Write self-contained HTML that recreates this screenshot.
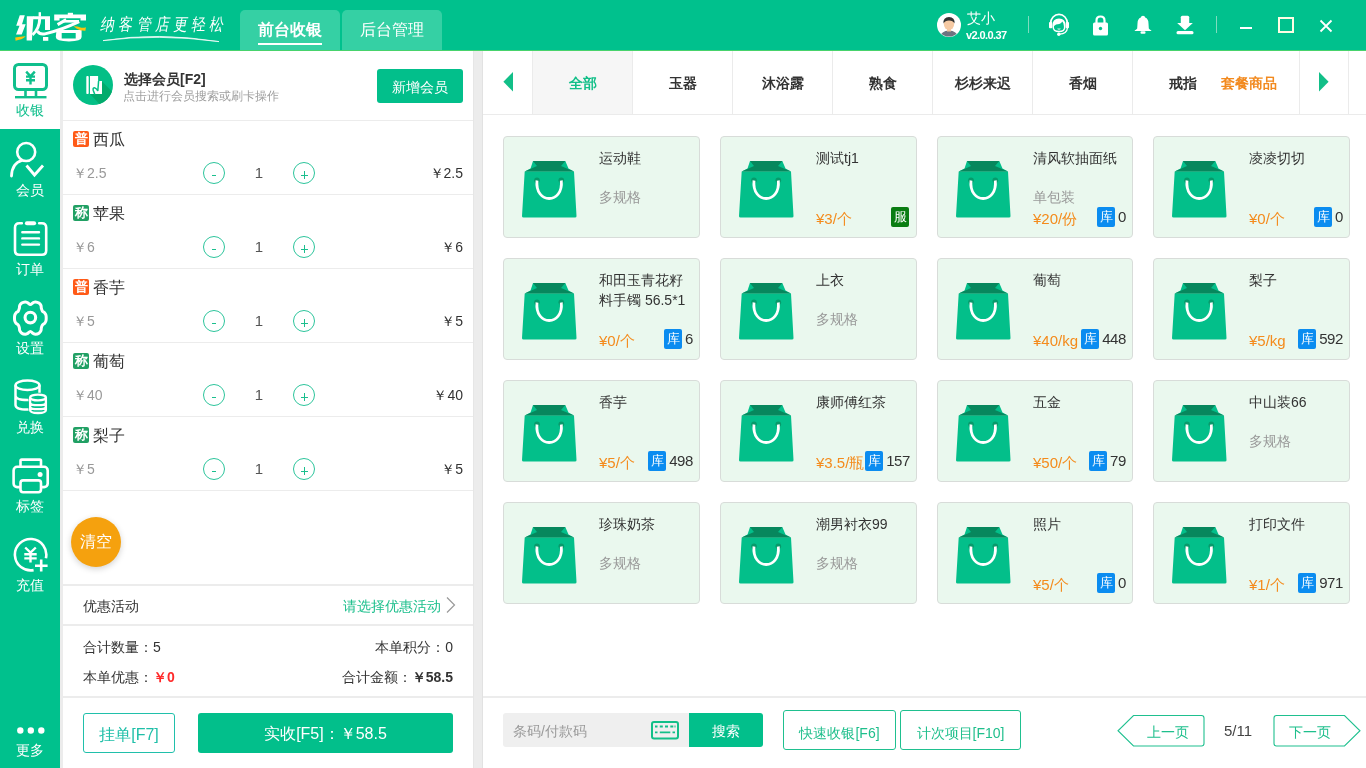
<!DOCTYPE html>
<html><head><meta charset="utf-8">
<style>
*{margin:0;padding:0;box-sizing:border-box}
html,body{width:1366px;height:768px;overflow:hidden;background:#fff;-webkit-font-smoothing:antialiased;font-family:"Liberation Sans",sans-serif;color:#333}
.a{position:absolute}
.t{position:absolute;white-space:nowrap;line-height:1}
#hdr{position:absolute;left:0;top:0;width:1366px;height:51px;background:#00c18d;border-bottom:1px solid #48d36c}
.tab{position:absolute;top:10px;height:40px;background:#35d0a4;border-radius:5px 5px 0 0}
#side{position:absolute;left:0;top:51px;width:60px;height:717px;background:#00c18d}
.sl{position:absolute;left:0;width:60px;text-align:center;font-size:14px;color:#fff;line-height:14px}
.strip{position:absolute;background:#ececec}
.row{position:absolute;left:63px;width:410px;height:74px;border-bottom:1px solid #ececec}
.bdg{position:absolute;left:10px;top:10px;width:16px;height:16px;border-radius:2px;color:#fff;font-size:13px;line-height:16px;text-align:center;font-weight:bold}
.nm{position:absolute;left:30px;top:10px;font-size:16px;line-height:18px;color:#333;white-space:nowrap}
.pr{position:absolute;left:10px;top:44px;font-size:14px;line-height:16px;color:#999;white-space:nowrap}
.cir{position:absolute;top:41px;width:22px;height:22px;border:1px solid #2cc49b;border-radius:50%}.cir i{position:absolute;background:#1bbf8e}
.qty{position:absolute;left:189px;width:14px;top:43px;font-size:15px;line-height:17px;color:#555;text-align:center}
.tot{position:absolute;right:10px;top:44px;font-size:14px;line-height:16px;color:#333;white-space:nowrap}
.card{position:absolute;width:197px;height:102px;background:#eaf8ee;border:1px solid #d8dcd9;border-radius:4px}
.bag{position:absolute;left:18px;top:24px}
.cn{position:absolute;left:95px;top:11px;width:96px;font-size:14px;line-height:20px;color:#333}
.cs{position:absolute;left:95px;top:52px;font-size:14px;line-height:16px;color:#999;white-space:nowrap}
.cp{position:absolute;left:95px;top:73px;font-size:15px;line-height:17px;color:#f48b1c;white-space:nowrap}
.stk{position:absolute;right:6px;top:70px;height:20px;font-size:15px;line-height:20px;color:#333;white-space:nowrap;letter-spacing:-0.4px}
.stk b{display:inline-block;width:18px;height:20px;background:#0b8cf0;color:#fff;font-weight:normal;font-size:13px;text-align:center;border-radius:2px;margin-right:3px;vertical-align:top;letter-spacing:0}
.ctab{position:absolute;top:51px;height:63px;border-right:1px solid #ebebeb;font-size:14px;font-weight:bold;color:#333;text-align:center;line-height:65px}
.obtn{position:absolute;border:1px solid #1fc08f;border-radius:3px;color:#1fbf8c;font-size:14px;text-align:center;padding-top:3px}
</style></head><body><div style="position:absolute;left:0;top:0;width:1366px;height:768px;will-change:transform">
<div id="hdr">
<svg class="a" style="left:0;top:0" width="100" height="50" viewBox="0 0 100 50">
<g fill="#fff">
<polygon points="19.75,15.3 24.8,15.3 22,24.2 25.7,24.2 21.7,34.6 16,34.6 19.5,25.8 16.2,25.8"/>
<polygon points="26.8,16.2 33.5,16.2 31.9,40.5 26.6,40.5"/>
<rect x="38.6" y="12.2" width="2.4" height="4.5"/>
<polygon points="33,16.2 50,16.2 50,29.9 45,29.9 45,19.3 33,19.3"/>
<rect x="43" y="37" width="5.3" height="3.8"/>
<rect x="67.8" y="12.8" width="5.2" height="2.5"/>
<polygon points="54.2,14.4 86,14.4 86,20.6 80.5,20.6 80.5,18.2 59.5,18.2 59.5,20.6 54.2,20.6"/>
<path d="M56.5,29.9 L81.6,29.9 L81.6,37 Q81.6,41.4 69,41.4 Q55.8,41.4 55.8,37 Z M61.7,33 L61.7,38.5 L75.7,38.5 L75.7,33 Z" fill-rule="evenodd"/>
</g>
<g fill="none" stroke="#fff" stroke-linecap="butt">
<path d="M39.8,18 Q39.5,29 32.5,34.8" stroke-width="3"/>
<path d="M37.3,31.2 Q40,35.2 46,33.6 Q62,29.6 79.2,21.6" stroke-width="3"/>
<path d="M57.6,24.6 L66.2,19.6" stroke-width="3"/>
<path d="M63,21.3 L79,21.3" stroke-width="2.6"/>
</g>
<g fill="#ffc20e">
<path d="M15.2,37.6 Q20,36.4 25.6,36.2 Q24,38.6 19,39.8 L15.6,40.7 Z"/>
<path d="M73.5,26.2 Q78,26.3 80.5,27.5 Q83,28.2 85.9,27.2 L85.4,30.8 Q80,31 76.5,28.5 Z"/>
</g>
</svg>
<div class="t" style="left:103px;top:14px;font-size:14px;line-height:16px;color:#fff;letter-spacing:4.2px;font-weight:300;transform:skewX(-10deg) scaleY(1.2);transform-origin:0 0">纳客管店更轻松</div>
<svg class="a" style="left:100px;top:33px" width="125" height="12" viewBox="0 0 125 12"><path d="M3,7.6 Q58,-1.2 119,8.6 Q58,0.6 3,7.6 Z" stroke="#fff" stroke-width="0.7" fill="#fff" stroke-linejoin="round"/></svg>
<div class="tab" style="left:240px;width:100px"></div>
<div class="tab" style="left:342px;width:100px"></div>
<div class="t" style="left:258px;top:21px;font-size:16px;line-height:18px;color:#fff;font-weight:bold">前台收银</div>
<div class="a" style="left:258px;top:43px;width:64px;height:2px;background:#fff"></div>
<div class="t" style="left:360px;top:21px;font-size:16px;line-height:18px;color:#fff">后台管理</div>
<!-- user -->
<svg class="a" style="left:937px;top:13px" width="24" height="24" viewBox="0 0 24 24">
<circle cx="12" cy="12" r="12" fill="#fff"/>
<clipPath id="cc"><circle cx="12" cy="12" r="11.5"/></clipPath>
<g clip-path="url(#cc)">
<path d="M3,24 Q4,18 12,17.5 Q20,18 21,24 Z" fill="#6e7380"/>
<rect x="10" y="14.5" width="4" height="4" fill="#f2c6a0"/>
<ellipse cx="12" cy="11" rx="5.2" ry="6" fill="#f5c9a3"/>
<path d="M6.5,10.5 Q6,4 12,4 Q18,4 17.5,10.5 Q16,7.5 12,7.5 Q8,7.5 6.5,10.5 Z" fill="#333"/>
</g>
</svg>
<div class="t" style="left:967px;top:11px;font-size:14px;line-height:14px;color:#fff">艾小</div>
<div class="t" style="left:966px;top:29px;font-size:11px;line-height:12px;color:#fff;font-weight:bold;letter-spacing:-0.6px">v2.0.0.37</div>
<div class="a" style="left:1028px;top:16px;width:1px;height:17px;background:#7fdcbf"></div>
<!-- headset -->
<svg class="a" style="left:1047px;top:13px" width="24" height="24" viewBox="0 0 24 24">
<path d="M3.6,10.5 A8.4,9.2 0 0 1 20.4,10.5" fill="none" stroke="#fff" stroke-width="1.7"/>
<rect x="2" y="9" width="3.3" height="6.2" rx="1" fill="#fff"/>
<rect x="18.7" y="9" width="3.3" height="6.2" rx="1" fill="#fff"/>
<path d="M5.5,12 Q5.5,5.4 12,5.4 Q18.5,5.4 18.5,12 L18.5,14 Q18.5,19.3 12,19.3 Q5.5,19.3 5.5,14 Z" fill="#fff"/>
<path d="M7,13 Q8.5,11.2 12.3,11 Q14.6,10.6 15.2,8.6 Q16.7,10 16.9,13 L16.9,14.8 Q16.9,17.8 12,17.8 Q7,17.8 7,14.8 Z" fill="#00c18d"/>
<path d="M10.6,15.8 Q12,16.6 13.4,15.8" stroke="#fff" stroke-width="0.9" fill="none"/>
<path d="M20.4,15 Q20,20.6 12.5,21.2" fill="none" stroke="#fff" stroke-width="1.3"/>
<circle cx="11.8" cy="21.2" r="1.7" fill="#fff"/>
</svg>
<!-- lock -->
<svg class="a" style="left:1092px;top:15px" width="17" height="21" viewBox="0 0 17 21">
<path d="M4.5,8 L4.5,5.5 Q4.5,1.5 8.5,1.5 Q12.5,1.5 12.5,5.5 L12.5,8" fill="none" stroke="#fff" stroke-width="2.2"/>
<rect x="1" y="7.5" width="15" height="13" rx="1.5" fill="#fff"/>
<circle cx="8.5" cy="13.5" r="1.7" fill="#00c18d"/>
</svg>
<!-- bell -->
<svg class="a" style="left:1134px;top:15px" width="18" height="20" viewBox="0 0 18 20">
<path d="M9,0.8 Q11,1 11.2,2.5 Q14.5,3.8 14.5,8.5 L14.8,13.5 Q15.5,14.5 17.3,15.4 L17.3,16 L0.7,16 L0.7,15.4 Q2.5,14.5 3.2,13.5 L3.5,8.5 Q3.5,3.8 6.8,2.5 Q7,1 9,0.8 Z" fill="#fff"/>
<rect x="6.5" y="16.3" width="5" height="2.5" rx="1" fill="#fff"/>
</svg>
<!-- download -->
<svg class="a" style="left:1176px;top:15px" width="18" height="20" viewBox="0 0 18 20">
<rect x="4.8" y="0.8" width="8.4" height="8.5" rx="1.5" fill="#fff"/>
<polygon points="1.2,8 16.8,8 9,15.3" fill="#fff"/>
<rect x="0.5" y="16" width="17" height="3.2" rx="1.5" fill="#fff"/>
</svg>
<div class="a" style="left:1216px;top:16px;width:1px;height:17px;background:#7fdcbf"></div>
<div class="a" style="left:1240px;top:27px;width:12px;height:2px;background:#fff"></div>
<div class="a" style="left:1278px;top:17px;width:16px;height:16px;border:2px solid #fdfde3"></div>
<svg class="a" style="left:1319px;top:19px" width="14" height="14" viewBox="0 0 14 14"><path d="M1.5,1.5 L12.5,12.5 M12.5,1.5 L1.5,12.5" stroke="#fff" stroke-width="1.8"/></svg>
</div>
<div id="side">
<div class="a" style="left:0;top:0;width:60px;height:78px;background:#fff"></div>
</div>
<!-- sidebar icons (absolute page coords) -->
<svg class="a" style="left:10px;top:60px" width="42" height="42" viewBox="0 0 42 42">
<rect x="4.5" y="4.5" width="32" height="25" rx="4" fill="none" stroke="#0fbf8c" stroke-width="3"/>
<path d="M16.2,11.6 L20.5,16.4 L24.8,11.6 M16,16.6 L25,16.6 M16,20.3 L25,20.3 M20.5,16.4 L20.5,24.6" fill="none" stroke="#0fbf8c" stroke-width="2.4"/>
<path d="M15.5,30 L15.5,36 M26,30 L26,36" stroke="#0fbf8c" stroke-width="2.6"/>
<path d="M5,37.2 L36.5,37.2" stroke="#0fbf8c" stroke-width="2.4"/>
</svg>
<div class="sl" style="top:103px;color:#0fbf8c">收银</div>
<svg class="a" style="left:8px;top:140px" width="42" height="40" viewBox="0 0 42 40">
<circle cx="18.2" cy="12" r="9" fill="none" stroke="#fff" stroke-width="2.6"/>
<path d="M3.5,36 Q4,23 14,20.5" fill="none" stroke="#fff" stroke-width="2.8" stroke-linecap="round"/>
<path d="M18.5,25.5 L26.5,35 L35,25.5" fill="none" stroke="#fff" stroke-width="2.8"/>
</svg>
<div class="sl" style="top:183px">会员</div>
<svg class="a" style="left:11px;top:219px" width="40" height="40" viewBox="0 0 40 40">
<path d="M10.8,4.3 L8.3,4.3 Q4,4.3 4,8.6 L4,31.5 Q4,35.8 8.3,35.8 L30.9,35.8 Q35.2,35.8 35.2,31.5 L35.2,8.6 Q35.2,4.3 30.9,4.3 L28.2,4.3" fill="none" stroke="#fff" stroke-width="2.6" stroke-linecap="round"/>
<rect x="13.9" y="2.2" width="11.2" height="4.1" rx="2" fill="#fff"/>
<path d="M11.3,13.3 L28,13.3 M11.3,19.4 L28,19.4 M11.3,25.6 L28,25.6" stroke="#fff" stroke-width="2.4" stroke-linecap="round"/>
</svg>
<div class="sl" style="top:262px">订单</div>
<svg class="a" style="left:11px;top:298px" width="40" height="40" viewBox="0 0 40 40">
<path d="M19.35,6.60C18.39,6.60 17.34,5.04 16.48,4.59C15.62,4.14 15.15,3.84 14.19,3.90C13.24,3.97 11.66,4.40 10.75,4.99C9.85,5.58 9.15,6.57 8.75,7.46C8.35,8.34 8.59,9.39 8.35,10.32C8.11,11.25 7.87,12.25 7.32,13.01C6.76,13.78 5.62,14.21 5.02,14.91C4.43,15.60 4.02,16.34 3.76,17.20C3.50,18.06 3.48,19.11 3.48,20.06C3.48,21.02 3.50,22.07 3.76,22.93C4.02,23.79 4.43,24.52 5.02,25.22C5.62,25.92 6.76,26.35 7.32,27.11C7.87,27.88 8.11,28.88 8.35,29.81C8.59,30.73 8.35,31.78 8.75,32.67C9.15,33.56 9.85,34.54 10.75,35.13C11.66,35.73 13.24,36.16 14.19,36.22C15.15,36.29 15.62,35.98 16.48,35.54C17.34,35.09 18.39,33.53 19.35,33.53C20.30,33.53 21.36,35.09 22.21,35.54C23.07,35.98 23.55,36.29 24.51,36.22C25.46,36.16 27.04,35.73 27.95,35.13C28.85,34.54 29.55,33.56 29.95,32.67C30.35,31.78 30.11,30.73 30.35,29.81C30.59,28.88 30.83,27.88 31.38,27.11C31.94,26.35 33.08,25.92 33.68,25.22C34.27,24.52 34.68,23.79 34.94,22.93C35.19,22.07 35.22,21.02 35.22,20.06C35.22,19.11 35.19,18.06 34.94,17.20C34.68,16.34 34.27,15.60 33.68,14.91C33.08,14.21 31.94,13.78 31.38,13.01C30.83,12.25 30.59,11.25 30.35,10.32C30.11,9.39 30.35,8.34 29.95,7.46C29.55,6.57 28.85,5.58 27.95,4.99C27.04,4.40 25.46,3.97 24.51,3.90C23.55,3.84 23.07,4.14 22.21,4.59C21.36,5.04 20.30,6.60 19.35,6.60Z" fill="none" stroke="#fff" stroke-width="3"/>
<circle cx="19.35" cy="19.6" r="5.3" fill="none" stroke="#fff" stroke-width="3.1"/>
</svg>
<div class="sl" style="top:341px">设置</div>
<svg class="a" style="left:12px;top:378px" width="40" height="40" viewBox="0 0 40 40">
<ellipse cx="15.5" cy="7.2" rx="12" ry="4.8" fill="none" stroke="#fff" stroke-width="2.5"/>
<path d="M3.5,7.2 L3.5,27 Q3.5,31.6 15.5,31.6 L16.5,31.5 M3.5,17.5 Q3.5,22 15.5,22 L16.5,21.9 M27.5,7.2 L27.5,14.8" fill="none" stroke="#fff" stroke-width="2.5"/>
<ellipse cx="26" cy="19.5" rx="7.9" ry="2.9" fill="#00c18d" stroke="#fff" stroke-width="2.4"/>
<path d="M18.1,19.5 L18.1,32 Q18.1,35 26,35 Q33.9,35 33.9,32 L33.9,19.5 M18.1,24.4 Q18.1,27.2 26,27.2 Q33.9,27.2 33.9,24.4 M18.1,28.4 Q18.1,31.2 26,31.2 Q33.9,31.2 33.9,28.4" fill="none" stroke="#fff" stroke-width="2.3"/>
</svg>
<div class="sl" style="top:420px">兑换</div>
<svg class="a" style="left:10px;top:456px" width="42" height="40" viewBox="0 0 42 40">
<rect x="10.5" y="3.6" width="20.5" height="8" rx="1.2" fill="none" stroke="#fff" stroke-width="2.6"/>
<rect x="3.6" y="10.8" width="34.1" height="20.3" rx="3.6" fill="#00c18d" stroke="#fff" stroke-width="2.6"/>
<rect x="10.5" y="24.4" width="20.5" height="11.8" rx="2.6" fill="#00c18d" stroke="#fff" stroke-width="2.6"/>
<circle cx="30.1" cy="18.6" r="2.5" fill="#fff"/>
</svg>
<div class="sl" style="top:499px">标签</div>
<svg class="a" style="left:11px;top:535px" width="40" height="40" viewBox="0 0 40 40">
<path d="M34.9,23.2 A15.7,15.7 0 1 0 22.6,35.1" fill="none" stroke="#fff" stroke-width="2.6"/>
<path d="M14.2,12.5 L19.5,17.5 L24.8,12.5 M13.3,19.3 L25.7,19.3 M13.3,23.4 L25.7,23.4 M19.5,17.3 L19.5,27.5" fill="none" stroke="#fff" stroke-width="2.4"/>
<path d="M30.2,24.5 L30.2,36.5 M24,30.8 L36.6,30.8" stroke="#fff" stroke-width="2.6"/>
</svg>
<div class="sl" style="top:578px">充值</div>
<svg class="a" style="left:16.5px;top:727px" width="30" height="10" viewBox="0 0 30 10">
<circle cx="3.3" cy="3.5" r="3.2" fill="#fff"/><circle cx="13.8" cy="3.5" r="3.2" fill="#fff"/><circle cx="24.3" cy="3.5" r="3.2" fill="#fff"/>
</svg>
<div class="sl" style="top:743px">更多</div>
<div class="strip" style="left:60px;top:51px;width:3px;height:717px"></div>
<div class="strip" style="left:473px;top:51px;width:10px;height:717px"></div>
<div class="a" style="left:482px;top:51px;width:1px;height:717px;background:#e2e2e2"></div><div class="a" style="left:473px;top:51px;width:1px;height:717px;background:#e6e6e6"></div>

<!-- LEFT PANEL -->
<div class="a" style="left:63px;top:51px;width:410px;height:70px;border-bottom:1px solid #ececec"></div>
<svg class="a" style="left:73px;top:65px" width="40" height="40" viewBox="0 0 40 40">
<defs><clipPath id="mc"><circle cx="20" cy="20" r="20"/></clipPath></defs>
<circle cx="20" cy="20" r="20" fill="#03bf86"/>
<g clip-path="url(#mc)"><polygon points="29,16.5 48,35.5 35,48 17,29" fill="#02ab6c"/></g>
<rect x="13.3" y="11.1" width="2.4" height="17.9" rx="0.8" fill="#fff"/>
<path d="M17,11.1 L25.1,11.1 L25.1,16 L29,16 L29,29 L17,29 Z" fill="#fff"/>
<path d="M21.8,29.5 L20.2,25.2 Q19.6,22.6 22,22.9 Q23.6,23.3 24.8,26 L25.6,16" fill="none" stroke="#03bf86" stroke-width="1.5"/>
</svg>
<div class="t" style="left:124px;top:72px;font-size:14px;line-height:14px;font-weight:bold;color:#333">选择会员[F2]</div>
<div class="t" style="left:123px;top:90px;font-size:12px;line-height:13px;color:#9e9e9e">点击进行会员搜索或刷卡操作</div>
<div class="a" style="left:377px;top:69px;width:86px;height:34px;background:#02bf8b;border-radius:3px;color:#fff;font-size:14px;line-height:36px;text-align:center">新增会员</div>
<div class="row" style="top:121px"><div class="bdg" style="background:#ff5a17">普</div><div class="nm">西瓜</div><div class="pr">￥2.5</div><div class="cir" style="left:140px"><i style="left:7.5px;top:11.5px;width:4.5px;height:1.4px"></i></div><div class="qty">1</div><div class="cir" style="left:230px"><i style="left:6.5px;top:11.8px;width:7.6px;height:1.7px"></i><i style="left:9.5px;top:8.3px;width:1.7px;height:7.6px"></i></div><div class="tot">￥2.5</div></div>
<div class="row" style="top:195px"><div class="bdg" style="background:#21a064">称</div><div class="nm">苹果</div><div class="pr">￥6</div><div class="cir" style="left:140px"><i style="left:7.5px;top:11.5px;width:4.5px;height:1.4px"></i></div><div class="qty">1</div><div class="cir" style="left:230px"><i style="left:6.5px;top:11.8px;width:7.6px;height:1.7px"></i><i style="left:9.5px;top:8.3px;width:1.7px;height:7.6px"></i></div><div class="tot">￥6</div></div>
<div class="row" style="top:269px"><div class="bdg" style="background:#ff5a17">普</div><div class="nm">香芋</div><div class="pr">￥5</div><div class="cir" style="left:140px"><i style="left:7.5px;top:11.5px;width:4.5px;height:1.4px"></i></div><div class="qty">1</div><div class="cir" style="left:230px"><i style="left:6.5px;top:11.8px;width:7.6px;height:1.7px"></i><i style="left:9.5px;top:8.3px;width:1.7px;height:7.6px"></i></div><div class="tot">￥5</div></div>
<div class="row" style="top:343px"><div class="bdg" style="background:#21a064">称</div><div class="nm">葡萄</div><div class="pr">￥40</div><div class="cir" style="left:140px"><i style="left:7.5px;top:11.5px;width:4.5px;height:1.4px"></i></div><div class="qty">1</div><div class="cir" style="left:230px"><i style="left:6.5px;top:11.8px;width:7.6px;height:1.7px"></i><i style="left:9.5px;top:8.3px;width:1.7px;height:7.6px"></i></div><div class="tot">￥40</div></div>
<div class="row" style="top:417px"><div class="bdg" style="background:#21a064">称</div><div class="nm">梨子</div><div class="pr">￥5</div><div class="cir" style="left:140px"><i style="left:7.5px;top:11.5px;width:4.5px;height:1.4px"></i></div><div class="qty">1</div><div class="cir" style="left:230px"><i style="left:6.5px;top:11.8px;width:7.6px;height:1.7px"></i><i style="left:9.5px;top:8.3px;width:1.7px;height:7.6px"></i></div><div class="tot">￥5</div></div>

<div class="a" style="left:71px;top:517px;width:50px;height:50px;border-radius:50%;background:#f5a10e;box-shadow:0 2px 6px rgba(0,0,0,0.18);color:#fff;font-size:16px;line-height:50px;text-align:center">清空</div>
<div class="a" style="left:63px;top:584px;width:410px;height:2px;background:#ececec"></div>
<div class="t" style="left:83px;top:599px;font-size:14px;line-height:14px;color:#333">优惠活动</div>
<div class="t" style="left:343px;top:599px;font-size:14px;line-height:14px;color:#1bbf8c">请选择优惠活动</div>
<svg class="a" style="left:445px;top:596px" width="12" height="18" viewBox="0 0 12 18"><path d="M2,1.5 L9.5,9 L2,16.5" fill="none" stroke="#999" stroke-width="1.2"/></svg>
<div class="a" style="left:63px;top:624px;width:410px;height:2px;background:#ececec"></div>
<div class="t" style="left:83px;top:640px;font-size:14px;line-height:14px;color:#333">合计数量：5</div>
<div class="t" style="left:83px;top:670px;font-size:14px;line-height:14px;color:#333">本单优惠：<b style="color:#ff2a2a">￥0</b></div>
<div class="t" style="right:913px;top:640px;font-size:14px;line-height:14px;color:#333">本单积分：0</div>
<div class="t" style="right:913px;top:670px;font-size:14px;line-height:14px;color:#333">合计金额：<b>￥58.5</b></div>
<div class="a" style="left:63px;top:696px;width:410px;height:2px;background:#ececec"></div>
<div class="a" style="left:83px;top:713px;width:92px;height:40px;border:1px solid #20c0ab;border-radius:3px;color:#1fbfa8;font-size:16px;line-height:41px;text-align:center">挂单[F7]</div>
<div class="a" style="left:198px;top:713px;width:255px;height:40px;background:#02bf8b;border-radius:3px;color:#fff;font-size:16px;line-height:42px;text-align:center">实收[F5]：￥58.5</div>

<!-- RIGHT PANEL -->
<div class="a" style="left:483px;top:51px;width:883px;height:64px;border-bottom:1px solid #ebebeb"></div>
<svg class="a" style="left:503px;top:72px" width="11" height="20" viewBox="0 0 11 20"><polygon points="10,0 10,19.6 0.4,9.8" fill="#12bf88"/></svg>
<div class="a" style="left:532px;top:51px;width:1px;height:63px;background:#ebebeb"></div>
<div class="ctab" style="left:533px;width:100px;background:#f6f6f6;color:#12bf88">全部</div>
<div class="ctab" style="left:633px;width:100px">玉器</div>
<div class="ctab" style="left:733px;width:100px">沐浴露</div>
<div class="ctab" style="left:833px;width:100px">熟食</div>
<div class="ctab" style="left:933px;width:100px">杉杉来迟</div>
<div class="ctab" style="left:1033px;width:100px">香烟</div>
<div class="ctab" style="left:1133px;width:100px;border-right:none">戒指</div>
<div class="ctab" style="left:1199px;width:100px;border-right:none;color:#f28a1f;background:transparent">套餐商品</div>
<div class="a" style="left:1299px;top:51px;width:1px;height:63px;background:#ebebeb"></div>
<svg class="a" style="left:1318px;top:72px" width="12" height="20" viewBox="0 0 12 20"><polygon points="1,0 1,19.6 10.6,9.8" fill="#12bf88"/></svg>
<div class="a" style="left:1348px;top:51px;width:1px;height:63px;background:#ebebeb"></div>
<div class="card" style="left:503px;top:136px;width:197px"><svg class="bag" width="56" height="60" viewBox="0 0 56 60"><path d="M2.7,10.6 L52,10.6 L54.5,55 Q54.6,56.6 53,56.6 L1.5,56.6 Q-0.1,56.6 0,55 Z" fill="#03bf8a"/><polygon points="11,0 43.3,0 46.5,7.5 52,10.6 2.7,10.6 8.5,7.5" fill="#03bf8a"/><polygon points="11,0 43.3,0 39,5 52,10.6 2.7,10.6 15,5" fill="#07875d"/><circle cx="15" cy="19.3" r="2.8" fill="#079a6b"/><circle cx="39.3" cy="19.3" r="2.8" fill="#079a6b"/><path d="M15,19.5 C12.6,43.5 41.7,43.5 39.3,19.5" fill="none" stroke="#fff" stroke-width="2.8"/></svg><div class="cn">运动鞋</div><div class="cs">多规格</div></div>
<div class="card" style="left:720px;top:136px;width:197px"><svg class="bag" width="56" height="60" viewBox="0 0 56 60"><path d="M2.7,10.6 L52,10.6 L54.5,55 Q54.6,56.6 53,56.6 L1.5,56.6 Q-0.1,56.6 0,55 Z" fill="#03bf8a"/><polygon points="11,0 43.3,0 46.5,7.5 52,10.6 2.7,10.6 8.5,7.5" fill="#03bf8a"/><polygon points="11,0 43.3,0 39,5 52,10.6 2.7,10.6 15,5" fill="#07875d"/><circle cx="15" cy="19.3" r="2.8" fill="#079a6b"/><circle cx="39.3" cy="19.3" r="2.8" fill="#079a6b"/><path d="M15,19.5 C12.6,43.5 41.7,43.5 39.3,19.5" fill="none" stroke="#fff" stroke-width="2.8"/></svg><div class="cn">测试tj1</div><div class="cp">¥3/个</div><div class="a" style="right:7px;top:70px;width:18px;height:20px;background:#0a7d12;border-radius:2px;color:#fff;font-size:13px;line-height:20px;text-align:center">服</div></div>
<div class="card" style="left:937px;top:136px;width:196px"><svg class="bag" width="56" height="60" viewBox="0 0 56 60"><path d="M2.7,10.6 L52,10.6 L54.5,55 Q54.6,56.6 53,56.6 L1.5,56.6 Q-0.1,56.6 0,55 Z" fill="#03bf8a"/><polygon points="11,0 43.3,0 46.5,7.5 52,10.6 2.7,10.6 8.5,7.5" fill="#03bf8a"/><polygon points="11,0 43.3,0 39,5 52,10.6 2.7,10.6 15,5" fill="#07875d"/><circle cx="15" cy="19.3" r="2.8" fill="#079a6b"/><circle cx="39.3" cy="19.3" r="2.8" fill="#079a6b"/><path d="M15,19.5 C12.6,43.5 41.7,43.5 39.3,19.5" fill="none" stroke="#fff" stroke-width="2.8"/></svg><div class="cn">清风软抽面纸</div><div class="cs">单包装</div><div class="cp">¥20/份</div><div class="stk"><b>库</b>0</div></div>
<div class="card" style="left:1153px;top:136px;width:197px"><svg class="bag" width="56" height="60" viewBox="0 0 56 60"><path d="M2.7,10.6 L52,10.6 L54.5,55 Q54.6,56.6 53,56.6 L1.5,56.6 Q-0.1,56.6 0,55 Z" fill="#03bf8a"/><polygon points="11,0 43.3,0 46.5,7.5 52,10.6 2.7,10.6 8.5,7.5" fill="#03bf8a"/><polygon points="11,0 43.3,0 39,5 52,10.6 2.7,10.6 15,5" fill="#07875d"/><circle cx="15" cy="19.3" r="2.8" fill="#079a6b"/><circle cx="39.3" cy="19.3" r="2.8" fill="#079a6b"/><path d="M15,19.5 C12.6,43.5 41.7,43.5 39.3,19.5" fill="none" stroke="#fff" stroke-width="2.8"/></svg><div class="cn">凌凌切切</div><div class="cp">¥0/个</div><div class="stk"><b>库</b>0</div></div>
<div class="card" style="left:503px;top:258px;width:197px"><svg class="bag" width="56" height="60" viewBox="0 0 56 60"><path d="M2.7,10.6 L52,10.6 L54.5,55 Q54.6,56.6 53,56.6 L1.5,56.6 Q-0.1,56.6 0,55 Z" fill="#03bf8a"/><polygon points="11,0 43.3,0 46.5,7.5 52,10.6 2.7,10.6 8.5,7.5" fill="#03bf8a"/><polygon points="11,0 43.3,0 39,5 52,10.6 2.7,10.6 15,5" fill="#07875d"/><circle cx="15" cy="19.3" r="2.8" fill="#079a6b"/><circle cx="39.3" cy="19.3" r="2.8" fill="#079a6b"/><path d="M15,19.5 C12.6,43.5 41.7,43.5 39.3,19.5" fill="none" stroke="#fff" stroke-width="2.8"/></svg><div class="cn">和田玉青花籽料手镯 56.5*1</div><div class="cp">¥0/个</div><div class="stk"><b>库</b>6</div></div>
<div class="card" style="left:720px;top:258px;width:197px"><svg class="bag" width="56" height="60" viewBox="0 0 56 60"><path d="M2.7,10.6 L52,10.6 L54.5,55 Q54.6,56.6 53,56.6 L1.5,56.6 Q-0.1,56.6 0,55 Z" fill="#03bf8a"/><polygon points="11,0 43.3,0 46.5,7.5 52,10.6 2.7,10.6 8.5,7.5" fill="#03bf8a"/><polygon points="11,0 43.3,0 39,5 52,10.6 2.7,10.6 15,5" fill="#07875d"/><circle cx="15" cy="19.3" r="2.8" fill="#079a6b"/><circle cx="39.3" cy="19.3" r="2.8" fill="#079a6b"/><path d="M15,19.5 C12.6,43.5 41.7,43.5 39.3,19.5" fill="none" stroke="#fff" stroke-width="2.8"/></svg><div class="cn">上衣</div><div class="cs">多规格</div></div>
<div class="card" style="left:937px;top:258px;width:196px"><svg class="bag" width="56" height="60" viewBox="0 0 56 60"><path d="M2.7,10.6 L52,10.6 L54.5,55 Q54.6,56.6 53,56.6 L1.5,56.6 Q-0.1,56.6 0,55 Z" fill="#03bf8a"/><polygon points="11,0 43.3,0 46.5,7.5 52,10.6 2.7,10.6 8.5,7.5" fill="#03bf8a"/><polygon points="11,0 43.3,0 39,5 52,10.6 2.7,10.6 15,5" fill="#07875d"/><circle cx="15" cy="19.3" r="2.8" fill="#079a6b"/><circle cx="39.3" cy="19.3" r="2.8" fill="#079a6b"/><path d="M15,19.5 C12.6,43.5 41.7,43.5 39.3,19.5" fill="none" stroke="#fff" stroke-width="2.8"/></svg><div class="cn">葡萄</div><div class="cp">¥40/kg</div><div class="stk"><b>库</b>448</div></div>
<div class="card" style="left:1153px;top:258px;width:197px"><svg class="bag" width="56" height="60" viewBox="0 0 56 60"><path d="M2.7,10.6 L52,10.6 L54.5,55 Q54.6,56.6 53,56.6 L1.5,56.6 Q-0.1,56.6 0,55 Z" fill="#03bf8a"/><polygon points="11,0 43.3,0 46.5,7.5 52,10.6 2.7,10.6 8.5,7.5" fill="#03bf8a"/><polygon points="11,0 43.3,0 39,5 52,10.6 2.7,10.6 15,5" fill="#07875d"/><circle cx="15" cy="19.3" r="2.8" fill="#079a6b"/><circle cx="39.3" cy="19.3" r="2.8" fill="#079a6b"/><path d="M15,19.5 C12.6,43.5 41.7,43.5 39.3,19.5" fill="none" stroke="#fff" stroke-width="2.8"/></svg><div class="cn">梨子</div><div class="cp">¥5/kg</div><div class="stk"><b>库</b>592</div></div>
<div class="card" style="left:503px;top:380px;width:197px"><svg class="bag" width="56" height="60" viewBox="0 0 56 60"><path d="M2.7,10.6 L52,10.6 L54.5,55 Q54.6,56.6 53,56.6 L1.5,56.6 Q-0.1,56.6 0,55 Z" fill="#03bf8a"/><polygon points="11,0 43.3,0 46.5,7.5 52,10.6 2.7,10.6 8.5,7.5" fill="#03bf8a"/><polygon points="11,0 43.3,0 39,5 52,10.6 2.7,10.6 15,5" fill="#07875d"/><circle cx="15" cy="19.3" r="2.8" fill="#079a6b"/><circle cx="39.3" cy="19.3" r="2.8" fill="#079a6b"/><path d="M15,19.5 C12.6,43.5 41.7,43.5 39.3,19.5" fill="none" stroke="#fff" stroke-width="2.8"/></svg><div class="cn">香芋</div><div class="cp">¥5/个</div><div class="stk"><b>库</b>498</div></div>
<div class="card" style="left:720px;top:380px;width:197px"><svg class="bag" width="56" height="60" viewBox="0 0 56 60"><path d="M2.7,10.6 L52,10.6 L54.5,55 Q54.6,56.6 53,56.6 L1.5,56.6 Q-0.1,56.6 0,55 Z" fill="#03bf8a"/><polygon points="11,0 43.3,0 46.5,7.5 52,10.6 2.7,10.6 8.5,7.5" fill="#03bf8a"/><polygon points="11,0 43.3,0 39,5 52,10.6 2.7,10.6 15,5" fill="#07875d"/><circle cx="15" cy="19.3" r="2.8" fill="#079a6b"/><circle cx="39.3" cy="19.3" r="2.8" fill="#079a6b"/><path d="M15,19.5 C12.6,43.5 41.7,43.5 39.3,19.5" fill="none" stroke="#fff" stroke-width="2.8"/></svg><div class="cn">康师傅红茶</div><div class="cp">¥3.5/瓶</div><div class="stk"><b>库</b>157</div></div>
<div class="card" style="left:937px;top:380px;width:196px"><svg class="bag" width="56" height="60" viewBox="0 0 56 60"><path d="M2.7,10.6 L52,10.6 L54.5,55 Q54.6,56.6 53,56.6 L1.5,56.6 Q-0.1,56.6 0,55 Z" fill="#03bf8a"/><polygon points="11,0 43.3,0 46.5,7.5 52,10.6 2.7,10.6 8.5,7.5" fill="#03bf8a"/><polygon points="11,0 43.3,0 39,5 52,10.6 2.7,10.6 15,5" fill="#07875d"/><circle cx="15" cy="19.3" r="2.8" fill="#079a6b"/><circle cx="39.3" cy="19.3" r="2.8" fill="#079a6b"/><path d="M15,19.5 C12.6,43.5 41.7,43.5 39.3,19.5" fill="none" stroke="#fff" stroke-width="2.8"/></svg><div class="cn">五金</div><div class="cp">¥50/个</div><div class="stk"><b>库</b>79</div></div>
<div class="card" style="left:1153px;top:380px;width:197px"><svg class="bag" width="56" height="60" viewBox="0 0 56 60"><path d="M2.7,10.6 L52,10.6 L54.5,55 Q54.6,56.6 53,56.6 L1.5,56.6 Q-0.1,56.6 0,55 Z" fill="#03bf8a"/><polygon points="11,0 43.3,0 46.5,7.5 52,10.6 2.7,10.6 8.5,7.5" fill="#03bf8a"/><polygon points="11,0 43.3,0 39,5 52,10.6 2.7,10.6 15,5" fill="#07875d"/><circle cx="15" cy="19.3" r="2.8" fill="#079a6b"/><circle cx="39.3" cy="19.3" r="2.8" fill="#079a6b"/><path d="M15,19.5 C12.6,43.5 41.7,43.5 39.3,19.5" fill="none" stroke="#fff" stroke-width="2.8"/></svg><div class="cn">中山装66</div><div class="cs">多规格</div></div>
<div class="card" style="left:503px;top:502px;width:197px"><svg class="bag" width="56" height="60" viewBox="0 0 56 60"><path d="M2.7,10.6 L52,10.6 L54.5,55 Q54.6,56.6 53,56.6 L1.5,56.6 Q-0.1,56.6 0,55 Z" fill="#03bf8a"/><polygon points="11,0 43.3,0 46.5,7.5 52,10.6 2.7,10.6 8.5,7.5" fill="#03bf8a"/><polygon points="11,0 43.3,0 39,5 52,10.6 2.7,10.6 15,5" fill="#07875d"/><circle cx="15" cy="19.3" r="2.8" fill="#079a6b"/><circle cx="39.3" cy="19.3" r="2.8" fill="#079a6b"/><path d="M15,19.5 C12.6,43.5 41.7,43.5 39.3,19.5" fill="none" stroke="#fff" stroke-width="2.8"/></svg><div class="cn">珍珠奶茶</div><div class="cs">多规格</div></div>
<div class="card" style="left:720px;top:502px;width:197px"><svg class="bag" width="56" height="60" viewBox="0 0 56 60"><path d="M2.7,10.6 L52,10.6 L54.5,55 Q54.6,56.6 53,56.6 L1.5,56.6 Q-0.1,56.6 0,55 Z" fill="#03bf8a"/><polygon points="11,0 43.3,0 46.5,7.5 52,10.6 2.7,10.6 8.5,7.5" fill="#03bf8a"/><polygon points="11,0 43.3,0 39,5 52,10.6 2.7,10.6 15,5" fill="#07875d"/><circle cx="15" cy="19.3" r="2.8" fill="#079a6b"/><circle cx="39.3" cy="19.3" r="2.8" fill="#079a6b"/><path d="M15,19.5 C12.6,43.5 41.7,43.5 39.3,19.5" fill="none" stroke="#fff" stroke-width="2.8"/></svg><div class="cn">潮男衬衣99</div><div class="cs">多规格</div></div>
<div class="card" style="left:937px;top:502px;width:196px"><svg class="bag" width="56" height="60" viewBox="0 0 56 60"><path d="M2.7,10.6 L52,10.6 L54.5,55 Q54.6,56.6 53,56.6 L1.5,56.6 Q-0.1,56.6 0,55 Z" fill="#03bf8a"/><polygon points="11,0 43.3,0 46.5,7.5 52,10.6 2.7,10.6 8.5,7.5" fill="#03bf8a"/><polygon points="11,0 43.3,0 39,5 52,10.6 2.7,10.6 15,5" fill="#07875d"/><circle cx="15" cy="19.3" r="2.8" fill="#079a6b"/><circle cx="39.3" cy="19.3" r="2.8" fill="#079a6b"/><path d="M15,19.5 C12.6,43.5 41.7,43.5 39.3,19.5" fill="none" stroke="#fff" stroke-width="2.8"/></svg><div class="cn">照片</div><div class="cp">¥5/个</div><div class="stk"><b>库</b>0</div></div>
<div class="card" style="left:1153px;top:502px;width:197px"><svg class="bag" width="56" height="60" viewBox="0 0 56 60"><path d="M2.7,10.6 L52,10.6 L54.5,55 Q54.6,56.6 53,56.6 L1.5,56.6 Q-0.1,56.6 0,55 Z" fill="#03bf8a"/><polygon points="11,0 43.3,0 46.5,7.5 52,10.6 2.7,10.6 8.5,7.5" fill="#03bf8a"/><polygon points="11,0 43.3,0 39,5 52,10.6 2.7,10.6 15,5" fill="#07875d"/><circle cx="15" cy="19.3" r="2.8" fill="#079a6b"/><circle cx="39.3" cy="19.3" r="2.8" fill="#079a6b"/><path d="M15,19.5 C12.6,43.5 41.7,43.5 39.3,19.5" fill="none" stroke="#fff" stroke-width="2.8"/></svg><div class="cn">打印文件</div><div class="cp">¥1/个</div><div class="stk"><b>库</b>971</div></div>

<div class="a" style="left:483px;top:696px;width:883px;height:2px;background:#ececec"></div>
<div class="a" style="left:503px;top:713px;width:186px;height:34px;background:#efefef;border-radius:3px 0 0 3px"></div>
<div class="t" style="left:513px;top:724px;font-size:14px;line-height:14px;color:#999">条码/付款码</div>
<svg class="a" style="left:650px;top:720px" width="30" height="20" viewBox="0 0 30 20"><rect x="2" y="2" width="26" height="16.5" rx="2" fill="none" stroke="#12bf88" stroke-width="2"/><path d="M5,6.5 h2.5 M9.8,6.5 h3 M15,6.5 h3 M20.3,6.5 h3 M24.5,6.5 h1 M5,12.3 h2.5 M9.8,12.3 h10.5 M22.5,12.3 h2.5" stroke="#12bf88" stroke-width="1.8"/></svg>
<div class="a" style="left:689px;top:713px;width:74px;height:34px;background:#02bf8b;border-radius:0 3px 3px 0;color:#fff;font-size:14px;line-height:36px;text-align:center">搜索</div>
<div class="obtn" style="left:783px;top:710px;width:113px;height:40px;line-height:38px">快速收银[F6]</div>
<div class="obtn" style="left:900px;top:710px;width:121px;height:40px;line-height:38px">计次项目[F10]</div>
<svg class="a" style="left:1116px;top:713px" width="90" height="36" viewBox="0 0 90 36"><path d="M17.5,2.5 L85.5,2.5 Q88,2.5 88,5 L88,30.5 Q88,33 85.5,33 L17.5,33 L2,17.75 Z" fill="none" stroke="#1fc08f" stroke-width="1.1"/></svg>
<div class="t" style="left:1147px;top:725px;font-size:14px;line-height:14px;color:#1fbf8c">上一页</div>
<div class="t" style="left:1224px;top:723px;font-size:15px;line-height:15px;color:#444">5/11</div>
<svg class="a" style="left:1272px;top:713px" width="90" height="36" viewBox="0 0 90 36"><path d="M72.5,2.5 L4.5,2.5 Q2,2.5 2,5 L2,30.5 Q2,33 4.5,33 L72.5,33 L88,17.75 Z" fill="none" stroke="#1fc08f" stroke-width="1.1"/></svg>
<div class="t" style="left:1289px;top:725px;font-size:14px;line-height:14px;color:#1fbf8c">下一页</div>
</div></body></html>
